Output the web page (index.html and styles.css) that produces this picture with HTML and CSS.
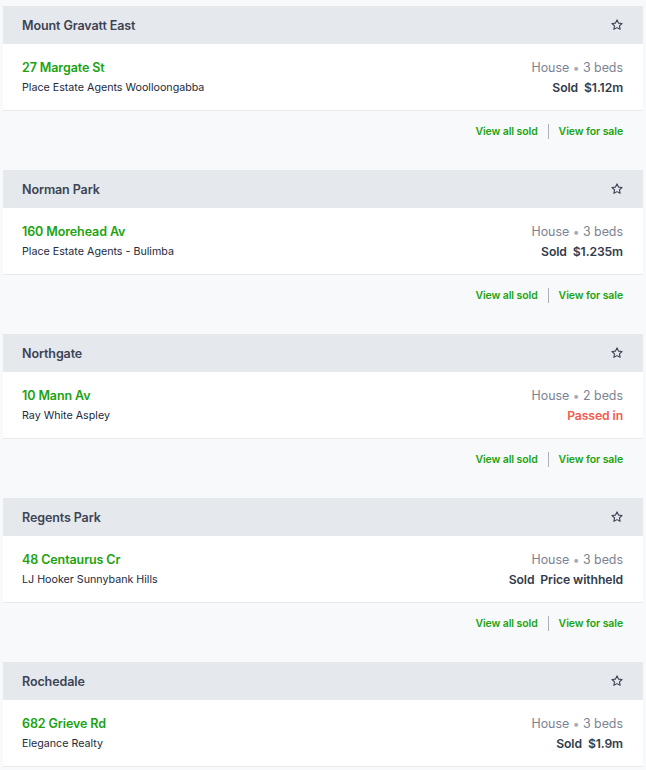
FILE: index.html
```html
<!DOCTYPE html>
<html>
<head>
<meta charset="utf-8">
<link rel="stylesheet" href="styles.css">
</head>
<body>
<div class="list">
  <section class="card">
    <div class="head"><span class="suburb">Mount Gravatt East</span><svg class="star" viewBox="0 0 24 24"><path d="M12 3.2l2.6 5.5 6 .7-4.4 4.1 1.2 5.9L12 16.5l-5.4 2.9 1.2-5.9-4.4-4.1 6-.7z"/></svg></div>
    <div class="body">
      <div class="left"><div class="addr">27 Margate St</div><div class="agent">Place Estate Agents Woolloongabba</div></div>
      <div class="right"><div class="meta">House <span class="dot">•</span> 3 beds</div><div class="price">Sold&nbsp; $1.12m</div></div>
    </div>
    <div class="foot"><a class="link">View all sold</a><span class="sep"></span><a class="link">View for sale</a></div>
  </section>
  <section class="card">
    <div class="head"><span class="suburb">Norman Park</span><svg class="star" viewBox="0 0 24 24"><path d="M12 3.2l2.6 5.5 6 .7-4.4 4.1 1.2 5.9L12 16.5l-5.4 2.9 1.2-5.9-4.4-4.1 6-.7z"/></svg></div>
    <div class="body">
      <div class="left"><div class="addr">160 Morehead Av</div><div class="agent">Place Estate Agents - Bulimba</div></div>
      <div class="right"><div class="meta">House <span class="dot">•</span> 3 beds</div><div class="price">Sold&nbsp; $1.235m</div></div>
    </div>
    <div class="foot"><a class="link">View all sold</a><span class="sep"></span><a class="link">View for sale</a></div>
  </section>
  <section class="card">
    <div class="head"><span class="suburb">Northgate</span><svg class="star" viewBox="0 0 24 24"><path d="M12 3.2l2.6 5.5 6 .7-4.4 4.1 1.2 5.9L12 16.5l-5.4 2.9 1.2-5.9-4.4-4.1 6-.7z"/></svg></div>
    <div class="body">
      <div class="left"><div class="addr">10 Mann Av</div><div class="agent">Ray White Aspley</div></div>
      <div class="right"><div class="meta">House <span class="dot">•</span> 2 beds</div><div class="price passed">Passed in</div></div>
    </div>
    <div class="foot"><a class="link">View all sold</a><span class="sep"></span><a class="link">View for sale</a></div>
  </section>
  <section class="card">
    <div class="head"><span class="suburb">Regents Park</span><svg class="star" viewBox="0 0 24 24"><path d="M12 3.2l2.6 5.5 6 .7-4.4 4.1 1.2 5.9L12 16.5l-5.4 2.9 1.2-5.9-4.4-4.1 6-.7z"/></svg></div>
    <div class="body">
      <div class="left"><div class="addr">48 Centaurus Cr</div><div class="agent">LJ Hooker Sunnybank Hills</div></div>
      <div class="right"><div class="meta">House <span class="dot">•</span> 3 beds</div><div class="price">Sold&nbsp; Price withheld</div></div>
    </div>
    <div class="foot"><a class="link">View all sold</a><span class="sep"></span><a class="link">View for sale</a></div>
  </section>
  <section class="card">
    <div class="head"><span class="suburb">Rochedale</span><svg class="star" viewBox="0 0 24 24"><path d="M12 3.2l2.6 5.5 6 .7-4.4 4.1 1.2 5.9L12 16.5l-5.4 2.9 1.2-5.9-4.4-4.1 6-.7z"/></svg></div>
    <div class="body">
      <div class="left"><div class="addr">682 Grieve Rd</div><div class="agent">Elegance Realty</div></div>
      <div class="right"><div class="meta">House <span class="dot">•</span> 3 beds</div><div class="price">Sold&nbsp; $1.9m</div></div>
    </div>
    <div class="foot"><a class="link">View all sold</a><span class="sep"></span><a class="link">View for sale</a></div>
  </section>
</div>
</body>
</html>
```
FILE: styles.css
```css
* { box-sizing: border-box; }
html, body { margin: 0; padding: 0; background: #f8f9fb; }
body { font-family: Inter, "Noto Sans", sans-serif; color: #3c475b; }
.list { padding: 6px 3px 0 3px; display: flex; flex-direction: column; gap: 19px; }
.card { display: flex; flex-direction: column; }
.head { height: 38px; background: #e5e8ec; display: flex; align-items: center; justify-content: space-between; padding: 0 19px 0 19px; }
.suburb { font-size: 12.5px; font-weight: 600; color: #3b4354; letter-spacing: -0.1px; }
.star { width: 14px; height: 14px; fill: none; stroke: #3b4354; stroke-width: 1.9; stroke-linejoin: round; }
.body { height: 67px; background: #fff; border-bottom: 1px solid #e7e9ed; display: flex; justify-content: space-between; padding: 16px 20px 0 19px; }
.left, .right { display: flex; flex-direction: column; gap: 4px; }
.right { align-items: flex-end; }
.addr { font-size: 12.5px; font-weight: 600; color: #1aa30f; line-height: 16px; letter-spacing: -0.1px; }
.agent { font-size: 10.7px; color: #222a3c; line-height: 14px; margin-top: 1px; }
.meta { font-size: 12.4px; color: #7b8292; line-height: 16px; }
.dot { color: #a6acb7; font-size: 12px; }
.price { font-size: 12.2px; font-weight: 600; color: #333b4b; line-height: 16px; letter-spacing: -0.1px; }
.price.passed { color: #f5594d; }
.foot { height: 40px; display: flex; justify-content: flex-end; align-items: center; padding: 0 20px 0 0; }
.link { font-size: 10.5px; font-weight: 600; color: #1aa30f; letter-spacing: -0.1px; }
.sep { width: 1px; height: 15px; background: #a9b0ba; margin: 0 10px 0 10px; }
```
